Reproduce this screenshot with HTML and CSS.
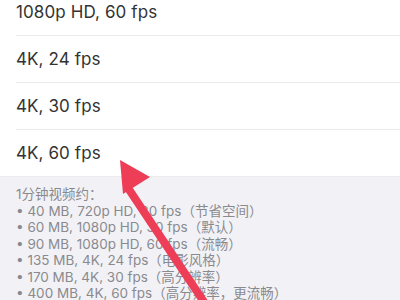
FILE: index.html
```html
<!DOCTYPE html>
<html lang="zh">
<head>
<meta charset="utf-8">
<link rel="stylesheet" href="styles.css">
</head>
<body>
<div class="screen">
  <ul class="list">
    <li class="row">1080p HD, 60 fps</li>
    <li class="row">4K, 24 fps</li>
    <li class="row">4K, 30 fps</li>
    <li class="row">4K, 60 fps</li>
  </ul>
  <div class="footer">
    <p>1分钟视频约：</p>
    <p>• 40 MB, 720p HD, 30 fps（节省空间）</p>
    <p>• 60 MB, 1080p HD, 30 fps（默认）</p>
    <p>• 90 MB, 1080p HD, 60 fps（流畅）</p>
    <p>• 135 MB, 4K, 24 fps（电影风格）</p>
    <p>• 170 MB, 4K, 30 fps（高分辨率）</p>
    <p>• 400 MB, 4K, 60 fps（高分辨率，更流畅）</p>
  </div>
  <svg class="arrow" width="400" height="300" viewBox="0 0 400 300">
    <line x1="128" y1="188" x2="204" y2="302" stroke="#ee3d57" stroke-width="8"/>
    <polygon points="120,160 123,194 150,177" fill="#ee3d57"/>
  </svg>
</div>
</body>
</html>
```
FILE: styles.css
```css
html, body {
  margin: 0;
  padding: 0;
  background: #ffffff;
}
.screen {
  position: relative;
  width: 400px;
  height: 300px;
  overflow: hidden;
  font-family: "Inter", "Noto Sans CJK SC", sans-serif;
}
.list {
  list-style: none;
  margin: -11px 0 0 0;
  padding: 0 0 0 16px;
  background: #ffffff;
  border-bottom: 1px solid #ececec;
}
.row {
  height: 46px;
  display: flex;
  align-items: center;
  font-size: 17px;
  letter-spacing: 0.1px;
  color: #333333;
  border-bottom: 1px solid #ebebeb;
}
.row:last-child {
  border-bottom: none;
}
.footer {
  background: #f2f2f6;
  padding: 9px 16px 20px 16px;
  color: #8a8a8e;
  font-size: 13.5px;
  line-height: 16.5px;
}
.footer p {
  margin: 0;
  white-space: nowrap;
}
.arrow {
  position: absolute;
  left: 0;
  top: 0;
}
```
